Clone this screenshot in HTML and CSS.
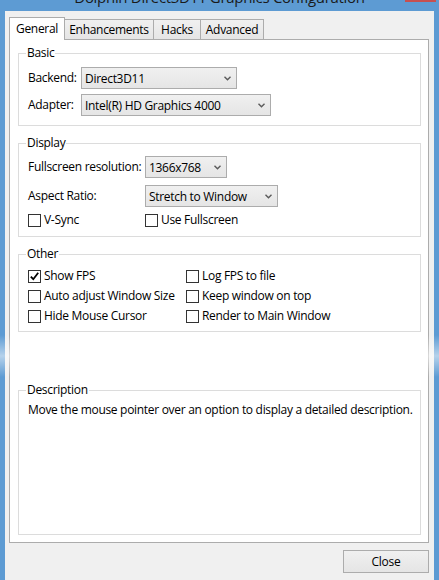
FILE: index.html
```html
<!DOCTYPE html>
<html>
<head>
<meta charset="utf-8">
<link rel="stylesheet" href="styles.css">
</head>
<body>
<div class="window">
  <div class="titlebar">
    <span class="title">Dolphin Direct3D11 Graphics Configuration</span>
    <span class="close-btn"></span>
  </div>
  <div class="client">
    <div class="tabs">
      <div class="tab active t-general">General</div>
      <div class="tab t-enh">Enhancements</div>
      <div class="tab t-hacks">Hacks</div>
      <div class="tab t-adv">Advanced</div>
    </div>
    <div class="pane">
      <fieldset class="group basic">
        <legend>Basic</legend>
        <div class="field-row">
          <span class="label lbl-basic">Backend:</span>
          <div class="combo w-backend"><span>Direct3D11</span><svg class="arrow" width="7" height="5" viewBox="0 0 7 5"><polyline points="0.5,0.8 3.5,3.8 6.5,0.8" /></svg></div>
        </div>
        <div class="field-row">
          <span class="label lbl-basic">Adapter:</span>
          <div class="combo w-adapter"><span>Intel(R) HD Graphics 4000</span><svg class="arrow" width="7" height="5" viewBox="0 0 7 5"><polyline points="0.5,0.8 3.5,3.8 6.5,0.8" /></svg></div>
        </div>
      </fieldset>

      <fieldset class="group display">
        <legend>Display</legend>
        <div class="field-row">
          <span class="label lbl-display">Fullscreen resolution:</span>
          <div class="combo w-res"><span>1366x768</span><svg class="arrow" width="7" height="5" viewBox="0 0 7 5"><polyline points="0.5,0.8 3.5,3.8 6.5,0.8" /></svg></div>
        </div>
        <div class="field-row gap7">
          <span class="label lbl-display">Aspect Ratio:</span>
          <div class="combo w-aspect"><span>Stretch to Window</span><svg class="arrow" width="7" height="5" viewBox="0 0 7 5"><polyline points="0.5,0.8 3.5,3.8 6.5,0.8" /></svg></div>
        </div>
        <div class="field-row check-row">
          <label class="check lbl-display"><span class="cb"></span>V-Sync</label>
          <label class="check"><span class="cb"></span>Use Fullscreen</label>
        </div>
      </fieldset>

      <fieldset class="group other">
        <legend>Other</legend>
        <div class="check-grid">
          <label class="check"><span class="cb"><svg width="11" height="11" viewBox="0 0 11 11"><path d="M1.8 5.6 L4.3 8.2 L9.2 1.8" /></svg></span>Show FPS</label>
          <label class="check"><span class="cb"></span>Log FPS to file</label>
          <label class="check"><span class="cb"></span>Auto adjust Window Size</label>
          <label class="check"><span class="cb"></span>Keep window on top</label>
          <label class="check"><span class="cb"></span>Hide Mouse Cursor</label>
          <label class="check"><span class="cb"></span>Render to Main Window</label>
        </div>
      </fieldset>

      <fieldset class="group description">
        <legend>Description</legend>
        <p class="desc-text">Move the mouse pointer over an option to display a detailed description.</p>
      </fieldset>
    </div>
    <div class="footer">
      <button class="btn">Close</button>
    </div>
  </div>
  <div class="glare"></div>
</div>
</body>
</html>
```

FILE: styles.css
```css
html, body {
  margin: 0;
  padding: 0;
}
body {
  width: 439px;
  height: 580px;
  overflow: hidden;
  font-family: "Open Sans", "Liberation Sans", sans-serif;
  font-size: 12px;
  letter-spacing: -0.3px;
  color: #000;
}
.window {
  position: relative;
  height: 580px;
  box-sizing: border-box;
  background: #5d9bd3;
  display: flex;
  flex-direction: column;
  padding: 0 5px 0 5px;
}
.titlebar {
  flex: none;
  height: 11px;
  overflow: hidden;
  display: flex;
  justify-content: center;
  align-items: flex-start;
}
.title {
  font-size: 15px;
  line-height: 20px;
  margin-top: -13px;
  color: #1a1a1a;
  white-space: nowrap;
}
.close-btn {
  position: absolute;
  top: 0;
  right: 3px;
  width: 31px;
  height: 2px;
  background: #c75050;
}
.client {
  flex: 1;
  background: #f0f0f0;
  display: flex;
  flex-direction: column;
  padding: 6px 5px 0 4px;
  min-height: 0;
}
.tabs {
  flex: none;
  display: flex;
  align-items: flex-end;
  height: 23px;
  margin-bottom: -1px;
  position: relative;
  z-index: 1;
}
.tab {
  box-sizing: border-box;
  height: 21px;
  border: 1px solid #acacac;
  background: linear-gradient(#f0f0f0, #e5e5e5);
  display: flex;
  align-items: center;
  justify-content: center;
  margin-left: -1px;
  line-height: 14px;
  white-space: nowrap;
}
.tab.active {
  height: 23px;
  background: #fff;
  border-bottom: none;
  margin-left: 0;
  position: relative;
  z-index: 1;
  padding-bottom: 1px;
}
.t-general { width: 56px; }
.t-enh { width: 90px; }
.t-hacks { width: 48px; }
.t-adv { width: 64px; }
.pane {
  flex: 1;
  background: #fff;
  border: 1px solid #acacac;
  display: flex;
  flex-direction: column;
  padding: 6px 7px 7px 8px;
  min-height: 0;
}
fieldset.group {
  margin: 0;
  padding: 0 8px 8px 9px;
  border: 1px solid #dcdcdc;
  min-width: 0;
}
fieldset.group legend {
  padding: 0 1px;
  margin-left: -2px;
  line-height: 14px;
}
fieldset.basic { padding-top: 7px; padding-bottom: 9px; }
fieldset.display { margin-top: 10px; padding-top: 6px; padding-bottom: 9px; }
fieldset.other { margin-top: 10px; padding-top: 5px; padding-bottom: 5px; }
fieldset.description { margin-top: 51px; padding-top: 6px; flex: 1; }
.field-row {
  display: flex;
  align-items: center;
}
.field-row + .field-row { margin-top: 5px; }
.display .field-row.gap7 { margin-top: 7px; }
.display .field-row.check-row { margin-top: 6px; height: 14px; }
.label {
  flex: none;
  white-space: nowrap;
  line-height: 14px;
}
.lbl-basic { width: 53px; }
.lbl-display { width: 117px; flex: none; }
.combo {
  box-sizing: border-box;
  height: 22px;
  border: 1px solid #acacac;
  background: linear-gradient(#f0f0f0, #e5e5e5);
  display: flex;
  align-items: center;
  justify-content: space-between;
  padding: 0 5px 0 3px;
  white-space: nowrap;
  flex: none;
}
.arrow polyline {
  fill: none;
  stroke: #5a5a5a;
  stroke-width: 1.4;
}
.w-backend { width: 156px; }
.w-adapter { width: 190px; }
.w-res { width: 82px; }
.w-aspect { width: 133px; }
.check {
  display: flex;
  align-items: center;
  white-space: nowrap;
  line-height: 14px;
}
.cb {
  box-sizing: border-box;
  width: 13px;
  height: 13px;
  border: 1px solid #333;
  background: #fff;
  margin-right: 3px;
  flex: none;
  display: flex;
}
.cb svg path {
  fill: none;
  stroke: #000;
  stroke-width: 1.8;
}
.check-grid {
  display: grid;
  grid-template-columns: 158px 1fr;
  grid-auto-rows: 20px;
}
.desc-text {
  margin: 0;
  line-height: 14px;
  white-space: nowrap;
}
.footer {
  flex: none;
  display: flex;
  justify-content: flex-end;
  padding: 7px 0 7px 0;
}
.btn {
  box-sizing: border-box;
  width: 86px;
  height: 23px;
  border: 1px solid #acacac;
  background: linear-gradient(#f0f0f0, #e5e5e5);
  font: inherit;
  letter-spacing: inherit;
  color: #000;
  padding: 0;
  border-radius: 0;
}
.glare {
  position: absolute;
  left: 0;
  right: 0;
  top: 335px;
  height: 42px;
  background: linear-gradient(rgba(255,255,255,0), rgba(255,255,255,0.55), rgba(255,255,255,0));
  pointer-events: none;
}
```
